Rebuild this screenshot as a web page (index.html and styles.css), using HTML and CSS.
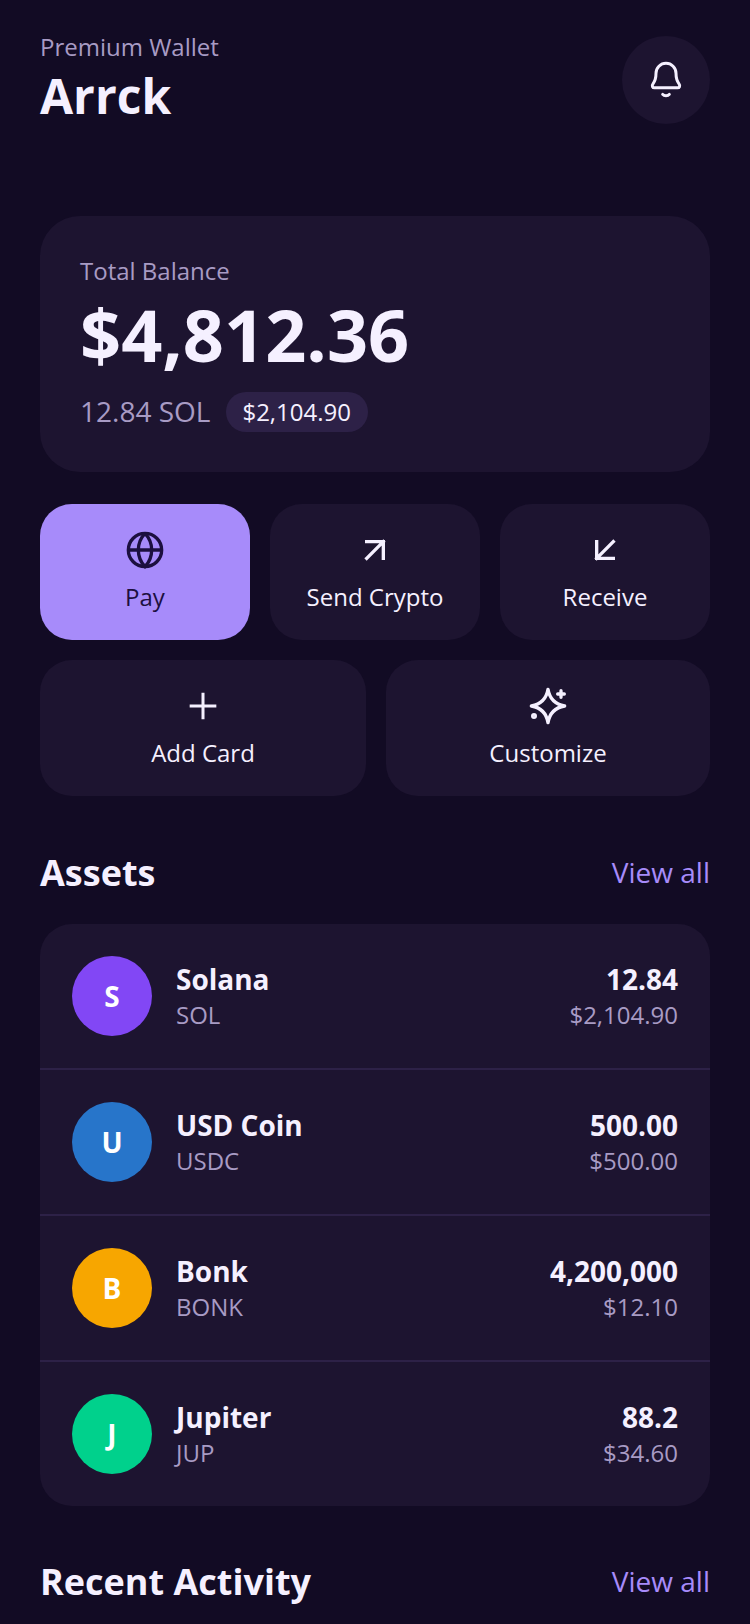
FILE: index.html
```html
<!DOCTYPE html>
<html>
<head>
<meta charset="utf-8">
<title>Arrck</title>
<link rel="stylesheet" href="styles.css">
</head>
<body>
<div class="page">
  <div class="top">
    <div>
      <p class="eyebrow">Premium Wallet</p>
      <h1 class="name">Arrck</h1>
    </div>
    <div class="bell">
      <svg width="40" height="40" viewBox="0 0 24 24" fill="none" stroke="#f5f0ff" stroke-width="1.8" stroke-linecap="round" stroke-linejoin="round">
        <path d="M6 8a6 6 0 0 1 12 0c0 3 .8 5 1.800 6.300.9 1.200.3 2.400-.9 2.400H5.100c-1.200 0-1.800-1.200-.9-2.400C5.200 13 6 11 6 8z"/>
        <path d="M10 20.600c.9 1.100 3.100 1.100 4 0"/>
      </svg>
    </div>
  </div>

  <section class="balance">
    <p class="balance-label">Total Balance</p>
    <p class="balance-value">$4,812.36</p>
    <div class="balance-sub">
      <span class="sol-amt">12.84 SOL</span>
      <span class="pill">$2,104.90</span>
    </div>
  </section>

  <div class="actions three">
    <div class="action primary">
      <svg width="40" height="40" viewBox="0 0 24 24" fill="none" stroke="#1c0f3f" stroke-width="2">
        <circle cx="12" cy="12" r="10"/>
        <path d="M12 2a14.500 14.500 0 0 0 0 20 14.500 14.500 0 0 0 0-20"/>
        <path d="M2 12h20"/>
      </svg>
      <span>Pay</span>
    </div>
    <div class="action">
      <svg width="40" height="40" viewBox="0 0 24 24" fill="none" stroke="#f5f0ff" stroke-width="2" stroke-linecap="square">
        <path d="M7 17L17 7M7 7h10v10"/>
      </svg>
      <span>Send Crypto</span>
    </div>
    <div class="action">
      <svg width="40" height="40" viewBox="0 0 24 24" fill="none" stroke="#f5f0ff" stroke-width="2" stroke-linecap="square">
        <path d="M17 7L7 17M7 7v10h10"/>
      </svg>
      <span>Receive</span>
    </div>
  </div>
  <div class="actions two">
    <div class="action">
      <svg width="40" height="40" viewBox="0 0 24 24" fill="none" stroke="#f5f0ff" stroke-width="1.8">
        <path d="M12 4v16M4 12h16"/>
      </svg>
      <span>Add Card</span>
    </div>
    <div class="action">
      <svg width="40" height="40" viewBox="0 0 24 24" fill="none" stroke="#f5f0ff" stroke-width="2" stroke-linecap="round" stroke-linejoin="round">
        <path d="M12 2c1 6 4 9 10 10-6 1-9 4-10 10-1-6-4-9-10-10 6-1 9-4 10-10z"/>
        <path d="M19.800 2.800v4M17.800 4.800h4"/>
        <circle cx="3.600" cy="18" r=".8"/>
      </svg>
      <span>Customize</span>
    </div>
  </div>

  <div class="section-head assets-head">
    <h2>Assets</h2>
    <a class="view-all">View all</a>
  </div>
  <div class="assets">
    <div class="asset">
      <div class="coin sol">S</div>
      <div class="asset-info"><b>Solana</b><span>SOL</span></div>
      <div class="asset-amt"><b>12.84</b><span>$2,104.90</span></div>
    </div>
    <div class="asset">
      <div class="coin usdc">U</div>
      <div class="asset-info"><b>USD Coin</b><span>USDC</span></div>
      <div class="asset-amt"><b>500.00</b><span>$500.00</span></div>
    </div>
    <div class="asset">
      <div class="coin bonk">B</div>
      <div class="asset-info"><b>Bonk</b><span>BONK</span></div>
      <div class="asset-amt"><b>4,200,000</b><span>$12.10</span></div>
    </div>
    <div class="asset">
      <div class="coin jup">J</div>
      <div class="asset-info"><b>Jupiter</b><span>JUP</span></div>
      <div class="asset-amt"><b>88.2</b><span>$34.60</span></div>
    </div>
  </div>

  <div class="section-head recent-head">
    <h2>Recent Activity</h2>
    <a class="view-all">View all</a>
  </div>
</div>
</body>
</html>
```

FILE: styles.css
```css
html, body {
  margin: 0;
  padding: 0;
  height: 1624px;
  overflow: hidden;
  background: #120b24;
}
body {
  font-family: "Open Sans", sans-serif;
  color: #f5f0ff;
}
p, h1, h2 {
  margin: 0;
}
.page {
  padding: 32px 40px 0;
}
.top {
  display: flex;
  justify-content: space-between;
  align-items: flex-start;
  height: 184px;
}
.eyebrow {
  font-size: 24px;
  line-height: 30px;
  color: #a89bc4;
}
.name {
  margin-top: 4px;
  font-size: 48px;
  line-height: 60px;
  font-weight: 700;
}
.bell {
  width: 88px;
  height: 88px;
  margin-top: 4px;
  border-radius: 50%;
  background: #1d1430;
  display: flex;
  align-items: center;
  justify-content: center;
}
.balance {
  background: #1d1430;
  border-radius: 40px;
  padding: 39px 40px 40px;
  height: 256px;
  box-sizing: border-box;
}
.balance-label {
  font-size: 24px;
  line-height: 32px;
  color: #a89bc4;
}
.balance-value {
  font-size: 72px;
  line-height: 94px;
  font-weight: 700;
}
.balance-sub {
  display: flex;
  align-items: center;
  gap: 16px;
  margin-top: 11px;
  font-size: 28px;
  color: #a89bc4;
}
.sol-amt {
  margin-bottom: 2px;
}
.pill {
  background: #2d2147;
  color: #f5f0ff;
  font-size: 24px;
  line-height: 32px;
  padding: 4px 17px 4px 16px;
  border-radius: 20px;
}
.actions {
  display: grid;
  gap: 20px;
}
.three {
  grid-template-columns: 1fr 1fr 1fr;
  margin-top: 32px;
}
.two {
  grid-template-columns: 326px 1fr;
  margin-top: 20px;
}
.action {
  height: 136px;
  background: #1d1430;
  border-radius: 32px;
  display: flex;
  flex-direction: column;
  align-items: center;
  justify-content: flex-start;
  padding-top: 26px;
  box-sizing: border-box;
  gap: 11px;
  font-size: 24px;
  line-height: 32px;
}
.primary {
  background: #a78bfa;
  color: #1c0f3f;
}
.section-head {
  display: flex;
  justify-content: space-between;
  align-items: center;
}
.section-head h2 {
  font-size: 36px;
  font-weight: 700;
}
.assets-head {
  margin-top: 46px;
  height: 60px;
}
.recent-head {
  margin-top: 45px;
  height: 60px;
}
.view-all {
  font-size: 28px;
  color: #a78bfa;
}
.assets {
  margin-top: 22px;
  background: #1d1430;
  border-radius: 32px;
  overflow: hidden;
}
.asset {
  display: flex;
  align-items: center;
  gap: 24px;
  padding: 32px;
  border-bottom: 2px solid #2d2147;
}
.asset:last-child {
  border-bottom: none;
}
.coin {
  width: 80px;
  height: 80px;
  border-radius: 50%;
  display: flex;
  align-items: center;
  justify-content: center;
  font-size: 28px;
  font-weight: 700;
  color: #fff;
}
.sol { background: #8247f5; }
.usdc { background: #2775ca; }
.bonk { background: #f7a600; }
.jup { background: #00d18c; }
.asset-info, .asset-amt {
  display: flex;
  flex-direction: column;
}
.asset-amt {
  margin-left: auto;
  text-align: right;
}
.asset b {
  font-size: 28px;
  line-height: 36px;
  font-weight: 700;
}
.asset span {
  margin-top: 2px;
  font-size: 24px;
  line-height: 32px;
  color: #a89bc4;
}
```
